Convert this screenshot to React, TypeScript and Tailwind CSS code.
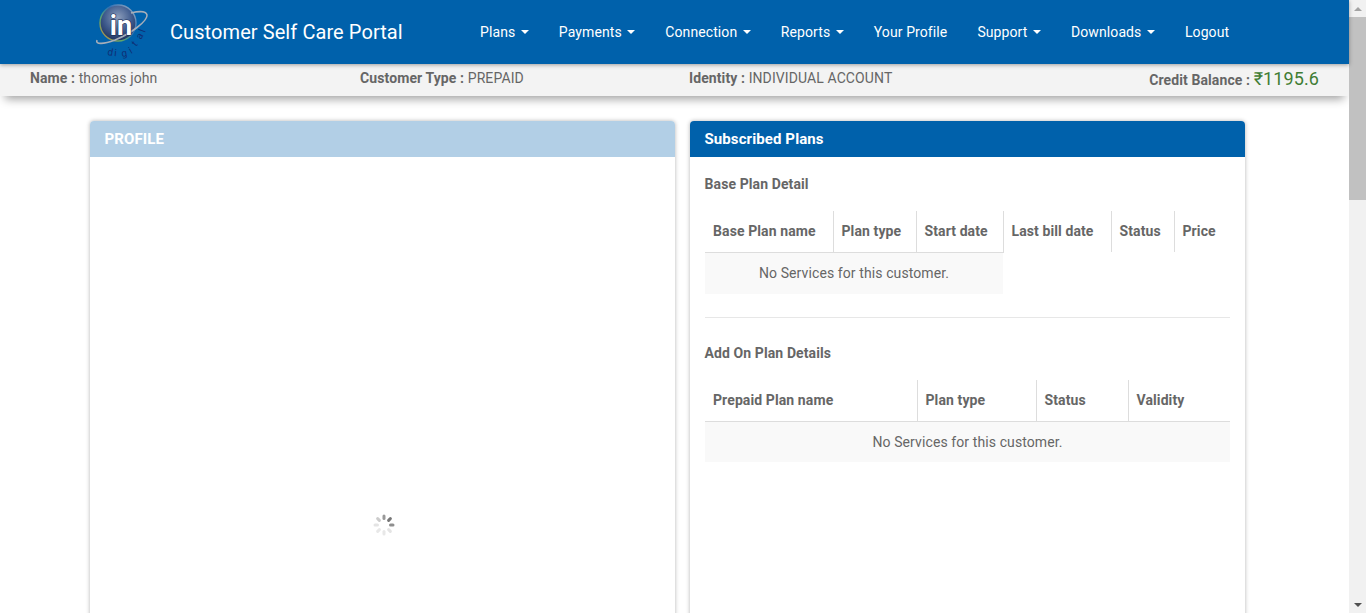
const navItems = [
  { label: 'Plans', caret: true },
  { label: 'Payments', caret: true },
  { label: 'Connection', caret: true },
  { label: 'Reports', caret: true },
  { label: 'Your Profile', caret: false },
  { label: 'Support', caret: true },
  { label: 'Downloads', caret: true },
  { label: 'Logout', caret: false },
]

const basePlanCols = [
  { label: 'Base Plan name', width: 'w-[128px]' },
  { label: 'Plan type', width: 'w-[83px]' },
  { label: 'Start date', width: 'w-[87px]' },
  { label: 'Last bill date', width: 'w-[108px]' },
  { label: 'Status', width: 'w-[63px]' },
  { label: 'Price', width: 'w-[56px]' },
]

const addOnCols = [
  { label: 'Prepaid Plan name', width: 'w-[212px]' },
  { label: 'Plan type', width: 'w-[119px]' },
  { label: 'Status', width: 'w-[92px]' },
  { label: 'Validity', width: 'w-[102px]' },
]

function Logo() {
  return (
    <svg width="56" height="60" viewBox="0 0 56 60" className="shrink-0">
      <defs>
        <radialGradient id="globe" cx="0.5" cy="0.35" r="0.7">
          <stop offset="0" stopColor="#8c9dbb" />
          <stop offset="0.55" stopColor="#3f5b8d" />
          <stop offset="1" stopColor="#1a2b55" />
        </radialGradient>
        <linearGradient id="rim" x1="0" y1="1" x2="1" y2="0">
          <stop offset="0" stopColor="#d9803a" />
          <stop offset="0.3" stopColor="#5fa86a" />
          <stop offset="0.6" stopColor="#2f6fb5" />
          <stop offset="1" stopColor="#aab3bf" />
        </linearGradient>
      </defs>
      <circle cx="23" cy="21" r="18" fill="url(#globe)" stroke="url(#rim)" strokeWidth="1.4" />
      <path d="M2 38 C 0 43, 9 42, 20 38 C 35 32, 53 19, 52 13 C 51 9, 44 9, 36 11" fill="none" stroke="#a6aeb9" strokeWidth="1.6" />
      <text x="26" y="33" textAnchor="middle" fontSize="27" fontWeight="700" fill="#ffffff" stroke="#14264d" strokeWidth="1.2" paintOrder="stroke" fontFamily="Roboto, sans-serif">in</text>
      <text
        x="12 19 27 36 41 46 50"
        y="53 54 55 52 45 38 31"
        rotate="10 5 -10 -30 -50 -60 -70"
        fontSize="10"
        fill="#0f2f75"
        fontFamily="Roboto, sans-serif"
      >
        digital
      </text>
    </svg>
  )
}

function Spinner() {
  const bars = [
    { angle: 0, color: '#999999' },
    { angle: 45, color: '#767676' },
    { angle: 90, color: '#8f8f8f' },
    { angle: 135, color: '#e4e4e4' },
    { angle: 180, color: '#e8e8e8' },
    { angle: 225, color: '#e8e8e8' },
    { angle: 270, color: '#e4e4e4' },
    { angle: 315, color: '#cccccc' },
  ]
  return (
    <svg width="22" height="24" viewBox="0 0 22 24">
      {bars.map((bar) => (
        <rect
          key={bar.angle}
          x="9.5"
          y="1.5"
          width="3"
          height="5.5"
          rx="1.5"
          fill={bar.color}
          transform={`rotate(${bar.angle} 11 12)`}
        />
      ))}
    </svg>
  )
}

function PlanTable({ cols, span, rowHeight }: { cols: { label: string; width: string }[]; span: number; rowHeight: string }) {
  return (
    <table className="w-[525px] table-fixed border-collapse">
      <thead>
        <tr>
          {cols.map((col, i) => (
            <th
              key={col.label}
              className={`${col.width} h-[41px] border-b px-2 text-left font-bold ${i > 0 ? 'border-l border-l-[#dddddd]' : ''} ${i < span ? 'border-b-[#dddddd]' : 'border-b-transparent'}`}
            >
              {col.label}
            </th>
          ))}
        </tr>
      </thead>
      <tbody>
        <tr>
          <td colSpan={span} className={`${rowHeight} bg-[#f9f9f9] px-2 text-center`}>
            No Services for this customer.
          </td>
        </tr>
      </tbody>
    </table>
  )
}

export default function App() {
  return (
    <div className="flex h-[613px] overflow-hidden bg-white font-['Roboto',sans-serif] text-sm tracking-[0.1px] text-[#666666]">
      <div className="min-w-0 flex-1">
        {/* Header */}
        <header className="relative z-10 flex h-16 items-center bg-[#0061ab] pl-[95px] shadow-[0_1px_4px_rgba(0,0,0,0.35)]">
          <Logo />
          <span className="ml-[19px] w-[310px] text-xl tracking-[0.08px] text-white">Customer Self Care Portal</span>
          <nav className="flex gap-[30px] text-white">
            {navItems.map((item) => (
              <a key={item.label} href="#" className="flex items-center whitespace-nowrap">
                {item.label}
                {item.caret && (
                  <span className="ml-[5.5px] h-0 w-0 border-x-4 border-t-4 border-x-transparent border-t-white" />
                )}
              </a>
            ))}
          </nav>
        </header>

        {/* Customer info */}
        <div className="flex h-8 items-center bg-[#f3f3f3] px-[30px] shadow-[0_8px_10px_-5px_rgba(0,0,0,0.38)]">
          <div className="w-[330px] pb-[5px]"><b>Name : </b>thomas john</div>
          <div className="w-[329px] pb-[5px]"><b>Customer Type : </b>PREPAID</div>
          <div className="pb-[5px]"><b>Identity : </b>INDIVIDUAL ACCOUNT</div>
          <div className="ml-auto flex items-baseline pb-[2px]">
            <b>Credit Balance :&nbsp;</b>
            <span className="text-lg leading-5 text-[#3f7d34]">₹1195.6</span>
          </div>
        </div>

        {/* Panels */}
        <div className="flex gap-[15px] pl-[90px] pt-[25px]">
          <section className="h-[560px] w-[585px] shrink-0 rounded-t-sm bg-white shadow-[0_0_4px_rgba(0,0,0,0.3)]">
            <h2 className="flex h-9 items-center rounded-t-sm bg-[#b2cfe6] pl-[14.5px] pt-[1px] text-[15px] font-bold text-white">PROFILE</h2>
            <div className="flex justify-center pl-[3px] pt-[356px]">
              <Spinner />
            </div>
          </section>

          <section className="h-[560px] w-[555px] shrink-0 rounded-t-sm bg-white shadow-[0_0_4px_rgba(0,0,0,0.3)]">
            <h2 className="flex h-9 items-center rounded-t-sm bg-[#0061ab] pl-[14.5px] pt-[1px] text-[15px] font-bold text-white">Subscribed Plans</h2>
            <div className="px-[15px]">
              <h3 className="-ml-[0.5px] pb-[18px] pt-[19px] font-bold leading-[17px]">Base Plan Detail</h3>
              <PlanTable cols={basePlanCols} span={3} rowHeight="h-[42px]" />
              <hr className="mb-[27px] mt-[23px] border-[#e7e7e7]" />
              <h3 className="-ml-[0.5px] pb-[18px] font-bold leading-[17px]">Add On Plan Details</h3>
              <PlanTable cols={addOnCols} span={4} rowHeight="h-[41px]" />
            </div>
          </section>
        </div>
      </div>

      {/* Scrollbar */}
      <div className="flex w-[17px] shrink-0 flex-col items-center bg-[#f1f1f1]">
        <div className="flex h-[17px] items-center justify-center">
          <span className="h-0 w-0 border-x-[4px] border-b-[4px] border-x-transparent border-b-[#a3a3a3]" />
        </div>
        <div className="h-[183px] w-full bg-[#c1c1c1]" />
        <div className="mt-auto flex h-[17px] items-center justify-center">
          <span className="h-0 w-0 border-x-[4px] border-t-[4px] border-x-transparent border-t-[#505050]" />
        </div>
      </div>
    </div>
  )
}
